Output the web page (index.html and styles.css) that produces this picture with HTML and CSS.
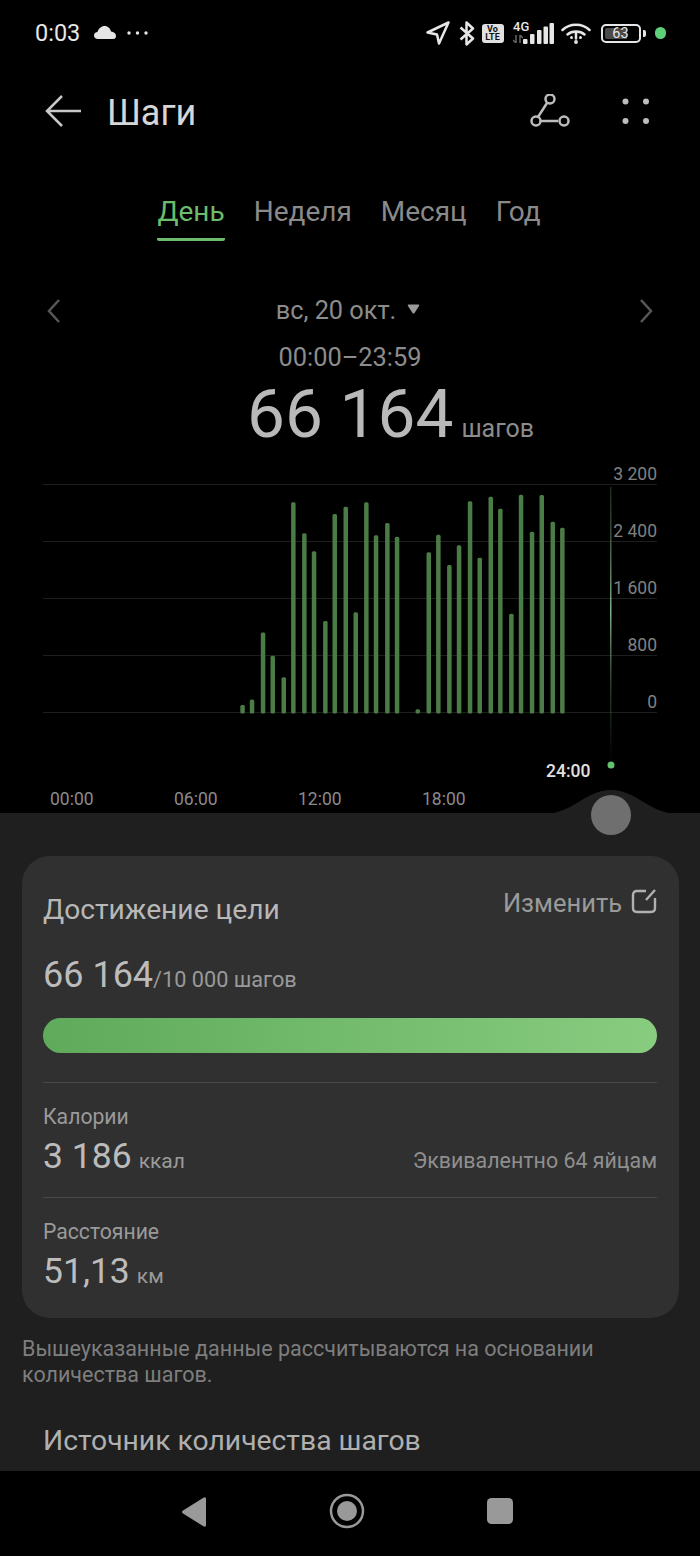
FILE: index.html
```html
<!DOCTYPE html>
<html lang="ru">
<head>
<meta charset="utf-8">
<title>Шаги</title>
<link rel="stylesheet" href="styles.css">
</head>
<body>
<div class="page">
  <header class="status">
    <div class="status-left">
      <span class="clock">0:03</span>
      <svg class="ico-cloud" width="22" height="13" viewBox="0 0 22 13"><path d="M4 13C1.5 13 0 11.5 0 9.5 0 7.5 1.5 6 3.5 6 4.5 2.5 7.5 0 10.5 0 14 0 16.5 2.5 17 5.5 20 5.8 22 7.5 22 10 22 12 21 13 19 13Z"/></svg>
      <svg class="ico-more" width="21" height="4" viewBox="0 0 21 4"><circle cx="2" cy="2" r="1.7"/><circle cx="10.5" cy="2" r="1.7"/><circle cx="19" cy="2" r="1.7"/></svg>
    </div>
    <div class="status-right">
      <svg class="ico-line" width="24" height="24" viewBox="0 0 24 24"><path d="M22.5 1.5 1.5 11.5 11 13.5 13 22.5Z"/></svg>
      <svg class="ico-line ico-bt" width="16" height="25" viewBox="0 0 16 25"><path d="M1.5 6.5 14 17.5 7.5 23.5V1.5L14 7.5 1.5 18.5"/></svg>
      <span class="volte">Vo<br>LTE</span>
      <span class="cell">
        <span class="cell-tag">4G</span>
        <svg class="cell-arrows" width="10" height="8" viewBox="0 0 10 8"><path d="M3 0V8M0 5 3 8M7 0V8M7 0 10 3"/></svg>
        <svg class="cell-bars" width="31" height="21" viewBox="0 0 31 21"><rect x="0" y="16" width="4.5" height="5" rx="1"/><rect x="7" y="11" width="4.5" height="10" rx="1"/><rect x="14" y="7" width="4.5" height="14" rx="1"/><rect x="20.5" y="3.5" width="4.5" height="17.5" rx="1"/><rect x="26.5" y="0" width="4.5" height="21" rx="1"/></svg>
      </span>
      <svg class="ico-wifi" width="30" height="22" viewBox="0 0 30 22"><path class="wifi-arc" d="M1.5 8C8.5 1 21.5 1 28.5 8M6.5 12.5C11 8.5 19 8.5 23.5 12.5"/><path class="wifi-tick" d="M15 11V16.5"/><circle class="wifi-dot" cx="15" cy="20" r="1.9"/><circle class="wifi-dot" cx="10.5" cy="15.5" r="1.5"/><circle class="wifi-dot" cx="19.500" cy="15.5" r="1.5"/></svg>
      <span class="battery"><span class="battery-fill"></span><span class="battery-num">63</span></span>
      <span class="battery-nub"></span>
      <span class="status-dot"></span>
    </div>
  </header>

  <nav class="appbar">
    <svg class="ico-back" width="38" height="34" viewBox="0 0 38 34"><path d="M36 17H3M17 2 2 17 17 32"/></svg>
    <h1 class="appbar-title">Шаги</h1>
    <svg class="ico-route" width="42" height="36" viewBox="0 0 42 36"><path d="M18 9 9 23M12 27H29"/><circle cx="21" cy="5" r="4.500"/><circle cx="7" cy="27" r="4.500"/><circle cx="35" cy="27" r="4.500"/></svg>
    <svg class="ico-grid" width="30" height="26" viewBox="0 0 30 26"><circle cx="4.500" cy="3.500" r="3"/><circle cx="25" cy="3.500" r="3"/><circle cx="4.500" cy="23" r="3"/><circle cx="25" cy="23" r="3"/></svg>
  </nav>

  <div class="tabs">
    <span class="tab tab-active">День</span>
    <span class="tab">Неделя</span>
    <span class="tab">Месяц</span>
    <span class="tab">Год</span>
  </div>

  <div class="date-row">
    <svg class="ico-chev" width="14" height="26" viewBox="0 0 14 26"><path d="M12 2 2 13 12 24"/></svg>
    <div class="date-label">вс, 20 окт.<svg class="ico-caret" width="13" height="10" viewBox="0 0 13 10"><path d="M1.500 0.500H11.500Q13 0.500 12 2L7.500 9Q6.500 10 5.500 9L1 2Q0 0.500 1.500 0.500Z"/></svg></div>
    <svg class="ico-chev" width="14" height="26" viewBox="0 0 14 26"><path d="M2 2 12 13 2 24"/></svg>
  </div>
  <div class="range">00:00–23:59</div>
  <div class="total"><span class="total-num">66 164</span><span class="total-unit">шагов</span></div>

  <section class="chart">
    <div class="y-axis">
      <div class="y-row y-row-first"><span>3 200</span></div>
      <div class="y-row"><span>2 400</span></div>
      <div class="y-row"><span>1 600</span></div>
      <div class="y-row"><span>800</span></div>
      <div class="y-row"><span>0</span></div>
    </div>
    <svg class="chart-plot" width="700" height="348" viewBox="0 465 700 348">
      <defs>
        <linearGradient id="cursor" x1="0" y1="0" x2="0" y2="1">
          <stop offset="0" stop-color="#3c5a3c" stop-opacity=".45"/>
          <stop offset=".45" stop-color="#7fb27f"/>
          <stop offset=".75" stop-color="#3c5a3c" stop-opacity=".6"/>
          <stop offset="1" stop-color="#3c5a3c" stop-opacity="0"/>
        </linearGradient>
      </defs>
      <rect x="610" y="487" width="1.500" height="275" fill="url(#cursor)"/>
      <g class="bars">
        <rect x="240.300" y="705" width="4.500" height="8.500" rx="1.500"/>
        <rect x="249.800" y="699.500" width="4.500" height="14" rx="1.500"/>
        <rect x="260.800" y="632.500" width="4.500" height="81" rx="1.500"/>
        <rect x="270.500" y="655.700" width="4.500" height="57.800" rx="1.500"/>
        <rect x="281.500" y="677.300" width="4.500" height="36.200" rx="1.500"/>
        <rect x="291.100" y="502.300" width="4.500" height="211.200" rx="1.500"/>
        <rect x="302.100" y="533.300" width="4.500" height="180.200" rx="1.500"/>
        <rect x="311.800" y="551.300" width="4.500" height="162.200" rx="1.500"/>
        <rect x="323.100" y="621" width="4.500" height="92.500" rx="1.500"/>
        <rect x="332.500" y="514" width="4.500" height="199.500" rx="1.500"/>
        <rect x="343.500" y="506.700" width="4.500" height="206.800" rx="1.500"/>
        <rect x="353.500" y="612.300" width="4.500" height="101.200" rx="1.500"/>
        <rect x="364.100" y="502.300" width="4.500" height="211.200" rx="1.500"/>
        <rect x="373.800" y="535.300" width="4.500" height="178.200" rx="1.500"/>
        <rect x="385.100" y="523" width="4.500" height="190.500" rx="1.500"/>
        <rect x="394.800" y="536.700" width="4.500" height="176.800" rx="1.500"/>
        <rect x="415.500" y="709.300" width="4.500" height="4.200" rx="1.500"/>
        <rect x="426.500" y="552.300" width="4.500" height="161.200" rx="1.500"/>
        <rect x="436.100" y="534.700" width="4.500" height="178.800" rx="1.500"/>
        <rect x="447.100" y="565" width="4.500" height="148.500" rx="1.500"/>
        <rect x="456.800" y="545.300" width="4.500" height="168.200" rx="1.500"/>
        <rect x="467.800" y="501.300" width="4.500" height="212.200" rx="1.500"/>
        <rect x="477.500" y="557.700" width="4.500" height="155.800" rx="1.500"/>
        <rect x="488.500" y="496.700" width="4.500" height="216.800" rx="1.500"/>
        <rect x="498.100" y="508.700" width="4.500" height="204.800" rx="1.500"/>
        <rect x="509.100" y="613.700" width="4.500" height="99.800" rx="1.500"/>
        <rect x="518.800" y="494.700" width="4.500" height="218.800" rx="1.500"/>
        <rect x="529.800" y="531.700" width="4.500" height="181.800" rx="1.500"/>
        <rect x="539.500" y="495" width="4.500" height="218.500" rx="1.500"/>
        <rect x="550.500" y="521.700" width="4.500" height="191.800" rx="1.500"/>
        <rect x="560.100" y="527.700" width="4.500" height="185.800" rx="1.500"/>
      </g>
      <circle class="cursor-dot" cx="611" cy="765" r="3.500"/>
    </svg>
    <span class="cursor-time">24:00</span>
    <div class="x-axis">
      <span>00:00</span><span>06:00</span><span>12:00</span><span>18:00</span>
    </div>
  </section>

  <main class="sheet">
    <svg class="sheet-bump" width="140" height="25" viewBox="0 0 140 25"><path d="M0 25C30 25 42 1 68 1 94 1 106 25 136 25Z"/></svg>
    <span class="knob"></span>

    <section class="card">
      <div class="card-head">
        <h2 class="card-title">Достижение цели</h2>
        <div class="edit">Изменить<svg class="ico-edit" width="26" height="26" viewBox="0 0 26 26"><path d="M15 3H6Q2 3 2 7V20Q2 24 6 24H20Q24 24 24 20V10M24 2 15 12"/></svg></div>
      </div>
      <div class="goal"><span class="goal-num">66 164</span><span class="goal-rest">/10 000 шагов</span></div>
      <div class="progress"></div>
      <div class="stat stat-ruled">
        <div class="stat-label">Калории</div>
        <div class="stat-line">
          <div><span class="stat-num">3 186</span><span class="stat-unit">ккал</span></div>
          <span class="stat-note">Эквивалентно 64 яйцам</span>
        </div>
      </div>
      <div class="stat">
        <div class="stat-label">Расстояние</div>
        <div class="stat-line">
          <div><span class="stat-num">51,13</span><span class="stat-unit">км</span></div>
        </div>
      </div>
    </section>

    <p class="footnote">Вышеуказанные данные рассчитываются на основании количества шагов.</p>
    <h2 class="source-title">Источник количества шагов</h2>
  </main>

  <footer class="navbar">
    <svg width="26" height="32" viewBox="0 0 26 32"><path d="M22 2Q25 0 25 3V29Q25 32 22 30L2 17.500Q0 16 2 14.500Z"/></svg>
    <svg width="36" height="36" viewBox="0 0 36 36"><circle class="nav-ring" cx="18" cy="18" r="16"/><circle cx="18" cy="18" r="10"/></svg>
    <svg width="26" height="26" viewBox="0 0 26 26"><rect width="26" height="26" rx="4.500"/></svg>
  </footer>
</div>
</body>
</html>
```

FILE: styles.css
```css
* { box-sizing: border-box; }

html, body { margin: 0; padding: 0; background: #000; }

body { font-family: Roboto, "Noto Sans", "Liberation Sans", sans-serif; }

h1, h2, p { margin: 0; font-weight: 400; }

svg { display: block; flex: none; }

.page {
  width: 700px;
  height: 1556px;
  display: flex;
  flex-direction: column;
  overflow: hidden;
  background: #000;
  color: #8c8c8c;
}

/* Status bar */
.status {
  height: 66px;
  flex: none;
  display: flex;
  justify-content: space-between;
  align-items: center;
  padding: 0 34px 0 35px;
  color: #e6e6e6;
  fill: #e6e6e6;
}
.status-left, .status-right { display: flex; align-items: center; }
.clock { font-size: 23.500px; font-weight: 400; line-height: 28px; }
.ico-cloud { margin-left: 14px; margin-top: -2px; }
.ico-more { margin-left: 11px; }
.ico-line { fill: none; stroke: #e6e6e6; stroke-width: 2.500px; stroke-linejoin: round; }
.ico-bt { margin-left: 9px; }
.volte {
  width: 22px;
  height: 19px;
  margin-left: 7px;
  background: #e0e0e0;
  border-radius: 3px;
  color: #111;
  font-size: 9px;
  font-weight: 700;
  line-height: 8.500px;
  text-align: center;
  padding-top: 1px;
}
.cell { position: relative; width: 42px; height: 22px; margin-left: 8px; }
.cell-tag {
  position: absolute;
  left: 1.500px;
  top: -1px;
  font-size: 13px;
  font-weight: 500;
  line-height: 12px;
}
.cell-arrows {
  position: absolute;
  left: 1px;
  top: 13px;
  fill: none;
  stroke: #666;
  stroke-width: 1.500px;
}
.cell-bars { position: absolute; right: 0; top: 1px; }
.ico-wifi { margin-left: 7px; }
.wifi-arc, .wifi-tick { fill: none; stroke: #e6e6e6; stroke-width: 2.500px; stroke-linecap: round; }
.wifi-dot { fill: #e6e6e6; }
.battery {
  position: relative;
  width: 40px;
  height: 19px;
  margin-left: 10px;
  border: 2px solid #e6e6e6;
  border-radius: 5px;
}
.battery-fill {
  position: absolute;
  left: 2px;
  top: 2px;
  bottom: 2px;
  width: 22px;
  background: #4a4a4a;
  border-radius: 2px 0 0 2px;
}
.battery-num {
  position: absolute;
  left: 0;
  right: 0;
  top: 0;
  text-align: center;
  font-size: 14.500px;
  line-height: 15px;
}
.battery-nub {
  width: 3px;
  height: 7px;
  margin-left: 2px;
  background: #e6e6e6;
  border-radius: 0 2px 2px 0;
}
.status-dot {
  width: 11.500px;
  height: 11.500px;
  margin-left: 9px;
  border-radius: 50%;
  background: #5fd07a;
}

/* App bar */
.appbar {
  height: 92px;
  flex: none;
  display: flex;
  align-items: center;
  padding-left: 45px;
  color: #d6d6d6;
}
.ico-back { fill: none; stroke: #c8c8c8; stroke-width: 2.500px; margin-top: -2px; }
.appbar-title { font-size: 36px; line-height: 40px; margin: 2px 0 0 24px; flex: 1; }
.ico-route { fill: none; stroke: #bdbdbd; stroke-width: 2.500px; margin-right: 50px; margin-top: -1px; }
.ico-grid { fill: #bdbdbd; margin-right: 49px; margin-top: -3px; }

/* Period tabs */
.tabs {
  height: 124px;
  flex: none;
  display: flex;
  justify-content: center;
  gap: 29px;
  padding: 34px 2px 0 0;
}
.tab {
  height: 49px;
  font-size: 28px;
  line-height: 40px;
  color: #8a8a8a;
}
.tab-active { color: #6cbc6c; border-bottom: 3px solid #6cbc6c; border-radius: 0 0 2px 2px; }

/* Date switcher */
.date-row {
  height: 47px;
  flex: none;
  display: flex;
  align-items: center;
  justify-content: space-between;
  padding: 0 47px;
  margin-top: 5px;
}
.ico-chev { fill: none; stroke: #575757; stroke-width: 2.500px; }
.date-label {
  display: flex;
  align-items: center;
  gap: 11px;
  padding-right: 4px;
  font-size: 25.300px;
  line-height: 30px;
}
.ico-caret { fill: #9a9a9a; margin-top: -4px; }
.range { font-size: 25.400px; line-height: 30px; text-align: center; margin-top: 8px; flex: none; }
.total {
  height: 56px;
  flex: none;
  display: flex;
  justify-content: center;
  align-items: baseline;
  gap: 8px;
  margin-top: 11px;
  padding-left: 81px;
  color: #b9b9b9;
}
.total-num { font-size: 67.500px; line-height: 62px; }
.total-unit { font-size: 25px; color: #8c8c8c; }

/* Chart */
.chart { position: relative; height: 348px; flex: none; margin-top: 26px; }
.y-axis { position: absolute; left: 43px; right: 43px; top: 0; }
.y-row {
  height: 57px;
  display: flex;
  justify-content: flex-end;
  align-items: flex-end;
  border-bottom: 1px solid #1e1e1e;
  font-size: 17.500px;
  line-height: 20px;
  color: #808080;
}
.y-row-first { height: 20px; }
.chart-plot { position: absolute; left: 0; top: 0; }
.bars { fill: #4b7c46; }
.cursor-dot { fill: #62c26e; }
.cursor-time {
  position: absolute;
  left: 546px;
  top: 295px;
  font-size: 17.500px;
  font-weight: 500;
  line-height: 22px;
  color: #e0e0e0;
}
.x-axis {
  position: absolute;
  left: 50px;
  top: 323px;
  display: flex;
  font-size: 17.500px;
  line-height: 22px;
  color: #8a8a8a;
}
.x-axis span { width: 124px; }

/* Lower sheet */
.sheet {
  position: relative;
  flex: 1;
  min-height: 0;
  background: #1f1f1f;
  padding: 43px 21px 0 22px;
}
.sheet-bump { position: absolute; left: 543px; top: -24px; fill: #1f1f1f; }
.knob {
  position: absolute;
  left: 591px;
  top: -18px;
  width: 40px;
  height: 40px;
  border-radius: 50%;
  background: #6f6f6f;
}
.card {
  height: 462px;
  padding: 0 22px 0 21px;
  background: #303030;
  border-radius: 28px;
}
.card-head { display: flex; justify-content: space-between; height: 92px; }
.card-title { font-size: 28.200px; line-height: 34px; margin-top: 37px; color: #b8b8b8; }
.edit {
  display: flex;
  align-items: flex-start;
  gap: 9px;
  font-size: 25.500px;
  line-height: 30px;
  margin-top: 32px;
  color: #9a9a9a;
}
.ico-edit { fill: none; stroke: #b0b0b0; stroke-width: 2.400px; }
.goal { height: 38px; display: flex; align-items: baseline; margin-top: 8px; color: #9a9a9a; }
.goal-num { font-size: 36px; line-height: 38px; color: #bcbcbc; }
.goal-rest { font-size: 21.700px; }
.progress {
  height: 35px;
  margin-top: 24px;
  border-radius: 18px;
  background: linear-gradient(90deg, #5faa5b, #88cc80);
}
.stat { padding-top: 21px; height: 116px; }
.stat-ruled { margin-top: 29px; border-top: 1px solid #474747; border-bottom: 1px solid #474747; }
.stat-label { font-size: 21.200px; line-height: 26px; color: #9a9a9a; }
.stat-line { display: flex; justify-content: space-between; align-items: baseline; margin-top: 6px; }
.stat-num { font-size: 35.500px; line-height: 40px; color: #bcbcbc; }
.stat-unit { font-size: 21px; margin-left: 7px; color: #9a9a9a; }
.stat-note { font-size: 21.400px; color: #8f8f8f; }
.footnote {
  width: 620px;
  margin-top: 18px;
  font-size: 21.500px;
  line-height: 26px;
  color: #7e7e7e;
}
.source-title {
  margin: 36px 0 0 21px;
  font-size: 28.300px;
  line-height: 34px;
  color: #b0b0b0;
}

/* System navigation */
.navbar {
  position: relative;
  height: 85px;
  flex: none;
  background: #000;
  fill: #999;
}
.navbar svg { position: absolute; }
.navbar svg:nth-child(1) { left: 181px; top: 25px; }
.navbar svg:nth-child(2) { left: 329px; top: 22px; }
.navbar svg:nth-child(3) { left: 487px; top: 27px; }
.nav-ring { fill: none; stroke: #999; stroke-width: 2.500px; }
```
